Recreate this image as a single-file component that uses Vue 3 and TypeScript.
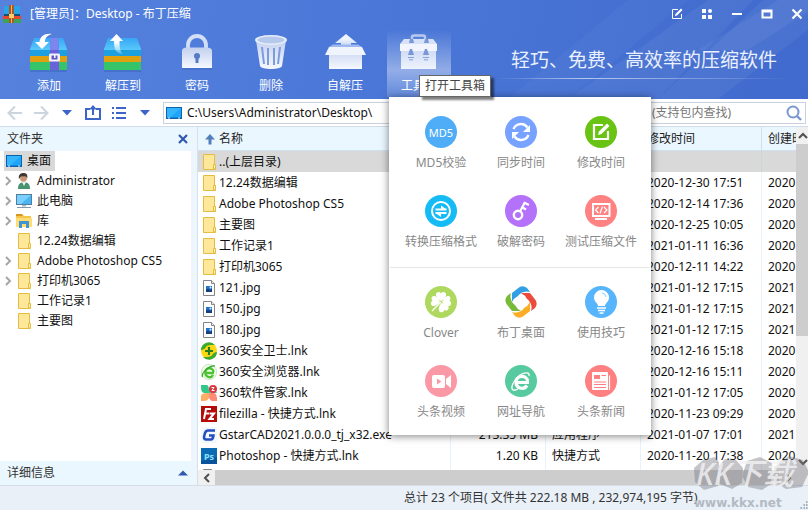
<script setup lang="ts">
import { ref } from 'vue'

interface TreeNode { label: string; icon: string; open: boolean }
interface FileRow { name: string; icon: string; size?: string; type?: string; modified?: string; created?: string }
interface MenuEntry { label: string; icon: string }

const search = ref('')
const path = ref('C:\\Users\\Administrator\\Desktop\\')

const tools: MenuEntry[] = [
  { label: '添加', icon: 'add' },
  { label: '解压到', icon: 'extract' },
  { label: '密码', icon: 'lock' },
  { label: '删除', icon: 'trash' },
  { label: '自解压', icon: 'selfx' },
]

const tree: TreeNode[] = [
  { label: 'Administrator', icon: 'user', open: true },
  { label: '此电脑', icon: 'pc', open: true },
  { label: '库', icon: 'library', open: true },
  { label: '12.24数据编辑', icon: 'folder', open: false },
  { label: 'Adobe Photoshop CS5', icon: 'folder', open: true },
  { label: '打印机3065', icon: 'folder', open: true },
  { label: '工作记录1', icon: 'folder', open: false },
  { label: '主要图', icon: 'folder', open: false },
]

const files: FileRow[] = [
  { name: '..(上层目录)', icon: 'folder' },
  { name: '12.24数据编辑', icon: 'folder', modified: '2020-12-30 17:51', created: '2020' },
  { name: 'Adobe Photoshop CS5', icon: 'folder', modified: '2020-12-14 17:36', created: '2020' },
  { name: '主要图', icon: 'folder', modified: '2020-12-25 10:05', created: '2020' },
  { name: '工作记录1', icon: 'folder', modified: '2021-01-11 16:36', created: '2020' },
  { name: '打印机3065', icon: 'folder', modified: '2020-12-11 14:22', created: '2020' },
  { name: '121.jpg', icon: 'jpg', modified: '2021-01-12 17:15', created: '2021' },
  { name: '150.jpg', icon: 'jpg', modified: '2021-01-12 17:15', created: '2021' },
  { name: '180.jpg', icon: 'jpg', modified: '2021-01-12 17:15', created: '2021' },
  { name: '360安全卫士.lnk', icon: 'guard', modified: '2020-12-16 15:18', created: '2020' },
  { name: '360安全浏览器.lnk', icon: 'browser', modified: '2020-12-16 15:11', created: '2020' },
  { name: '360软件管家.lnk', icon: 'manager', modified: '2021-01-12 17:05', created: '2020' },
  { name: 'filezilla - 快捷方式.lnk', icon: 'filezilla', modified: '2020-11-23 09:29', created: '2020' },
  { name: 'GstarCAD2021.0.0.0_tj_x32.exe', icon: 'gstar', size: '213.35 MB', type: '应用程序', modified: '2021-01-07 17:01', created: '2021' },
  { name: 'Photoshop - 快捷方式.lnk', icon: 'ps', size: '1.20 KB', type: '快捷方式', modified: '2020-11-20 17:38', created: '2020' },
  { name: '', icon: 'jpg' },
]

const menu: MenuEntry[][] = [
  [
    { label: 'MD5校验', icon: 'md5' },
    { label: '同步时间', icon: 'sync' },
    { label: '修改时间', icon: 'edit' },
    { label: '转换压缩格式', icon: 'convert' },
    { label: '破解密码', icon: 'key' },
    { label: '测试压缩文件', icon: 'test' },
  ],
  [
    { label: 'Clover', icon: 'clover' },
    { label: '布丁桌面', icon: 'pudding' },
    { label: '使用技巧', icon: 'bulb' },
    { label: '头条视频', icon: 'video' },
    { label: '网址导航', icon: 'ie' },
    { label: '头条新闻', icon: 'news' },
  ],
]

const box = `<rect x="0" y="35" width="37" height="3" fill="#3158ad" opacity=".35"/>
<path d="M4 4H33L37 15V17H0V15Z" fill="url(#gLid)"/><rect y="16" width="37" height="7" fill="#1fa0de"/>
<rect y="22" width="37" height="7" fill="#dfa10d"/><rect y="28" width="37" height="8" fill="#35c46a"/>`

// 38 x 38 toolbar pictures
const toolIcons: Record<string, string> = {
  add: `${box}<path d="M21 4H28L29 16V36H20V16Z" fill="#6a62d8"/><path d="M21 4H28L29 16H20Z" fill="#7d86ee"/>
<rect x="19" y="19.500" width="11" height="8" rx="1.500" fill="#f4f4ff"/><rect x="21.500" y="21.500" width="6" height="4" fill="#6156c8"/><rect x="24" y="21" width="1.500" height="3" fill="#fff"/>
<path d="M22 0C15 -1 10 2 9.500 8H5L12 15L19 8H15C15 4 17 1.500 22 0Z" fill="#fff"/>`,
  extract: `${box}<path d="M12.500 0L19 7H15.500C15.500 13 16 18 19 20C12 20 10 15 10 7H6Z" fill="url(#gUp)"/>`,
  lock: `<path d="M10 16V11A9 9 0 0 1 28 11V16" fill="none" stroke="#d3dff6" stroke-width="3.800"/>
<rect x="4" y="34" width="30" height="2" fill="#3158ad" opacity=".3"/><path d="M4 17C4 14 7 13.500 9 13.500H28C31 13.500 34 14 34 17V34H4Z" fill="url(#gW)"/>
<circle cx="19" cy="22" r="3" fill="#557bc6"/><rect x="17.500" y="23" width="3" height="6" fill="#557bc6"/>`,
  trash: `<path d="M4 6L8 32C9 36 29 36 30 32L34 6Z" fill="url(#gW)"/><ellipse cx="19" cy="6" rx="16" ry="5" fill="#e8effb"/><ellipse cx="19" cy="6" rx="13.500" ry="3.500" fill="#b6c8ec"/>
<path d="M10 13L12 30M16 14V31M22 14V31M28 13L26 30" stroke="#7e9bdc" stroke-width="2" fill="none"/>`,
  selfx: `<path d="M20 0L31 9H25V17H15V9H9Z" fill="url(#gUp2)"/><path d="M3 13L7 10.500H32L36 13" fill="#9db9ee"/>
<path d="M3 13H36V35H3Z" fill="url(#gW)"/><path d="M3 13H36L40 21H-1Z" fill="#f0f4fd"/>`,
  kit: `<path d="M12 6V3Q12 1.500 14 1.500H23Q25 1.500 25 3V6" fill="none" stroke="#b9c9ee" stroke-width="2.500"/>
<path d="M4 5H33L37 10V17H0V10Z" fill="#d7e1f7"/><path d="M0 10H37V17H0Z" fill="#f2f5fd"/><rect x="1" y="17" width="35" height="18" fill="url(#gW2)"/>
<path d="M10 5H13L14 9H9ZM25 5H28L29 9H24ZM10 15H12L14 21H8ZM25 15H27L29 21H23Z" fill="#7996d9"/><path d="M8 23.500H14M9 25.800H13M23 23.500H29M24 25.800H28" stroke="#86a0dc" stroke-width="1"/>`,
}

// 16 x 16 pictures for the tree and the file list
const smallIcons: Record<string, string> = {
  folder: `<path d="M2.500 .500H13.500V11H14.500V15.500H2.500Z" fill="#ffe79a" stroke="#e3bd42"/><path d="M12.500 15V10.500H14.500V15Z" fill="#fff0b8" stroke="#e3bd42"/>`,
  desktop: `<rect x="0" y="2" width="16" height="12" fill="#0b63ad"/><rect x="1" y="3" width="14" height="9.500" fill="#1ea5f7"/><path d="M1 3H15L4 12.500H1Z" fill="#35b5ff"/><path d="M2 13H4M12 13H14" stroke="#d5efff"/>`,
  user: `<path d="M2 16C2 11 4 10 7 9H9C12 10 14 11 14 16Z" fill="#489470"/><path d="M6 9L8 13L10 9Z" fill="#f2f2ec"/><circle cx="7.500" cy="5.500" r="3.300" fill="#c99672"/><path d="M3 6C2 1 5 0 8 0C11 0 12 3 11 6C11 4 10 3 8 3.500C6 3 5 3 4.500 4Z" fill="#40372f"/>`,
  pc: `<rect x=".500" y="1.500" width="15" height="10" fill="#48b6f3" stroke="#557e9c"/><path d="M1 2H15L5 11H1Z" fill="#7acfff"/><rect x="6" y="12" width="4" height="1.500" fill="#aab8c3"/><path d="M1 14.500H15" stroke="#8299aa"/>`,
  library: `<path d="M0 1H6L8 3H15V14H0Z" fill="#f4c64b"/><path d="M0 1H6L7 3H0Z" fill="#d6981f"/><path d="M0 5H16V14H0Z" fill="#ffdc75"/><path d="M3 15V8H13V15H10V11H6V15Z" fill="#3f96d2"/>`,
  jpg: `<path d="M2.500 .500H10.500L13.500 3.500V15.500H2.500Z" fill="#fff" stroke="#858585"/><path d="M10.500 .500V3.500H13.500" fill="#eee" stroke="#858585"/><rect x="5" y="6" width="6" height="6" fill="#2474c8"/><path d="M5 12V9.500L7 8.500L9 10L11 8.500V12Z" fill="#153f7b"/><circle cx="9.500" cy="7.500" r="1" fill="#d8f0ff"/>`,
  guard: `<circle cx="8" cy="8" r="8" fill="#ffd810"/><path d="M0 7A8 8 0 0 1 14 2C10 2 6 2 5 4C4 6 2 7 0 7ZM16 9A8 8 0 0 1 2 14C6 14 10 14 11 12C12 10 14 9 16 9Z" fill="#3daa2f"/><path d="M8 4V12M4 8H12" stroke="#237f20" stroke-width="2.200"/>`,
  browser: `<circle cx="8" cy="8" r="7.700" fill="#eefbe9" stroke="#c2dcc0" stroke-width=".800"/><path d="M13 9H5.500M4.500 8.500A4 4 0 0 1 12.500 8M4.500 8.500A4 4 0 0 0 12 11" fill="none" stroke="#4cc22f" stroke-width="2.300"/><path d="M1.500 13C0 9 8 1 14 2" fill="none" stroke="#37a92d" stroke-width="1.300"/>`,
  manager: `<path d="M0 0H6C8 1 8 4 8 8H3C0 7 0 4 0 0Z" fill="#32c889"/><path d="M0 16V11C1 8 4 8 8 8V13C7 16 4 16 0 16Z" fill="#ffad63"/><path d="M8 8H13C16 9 16 12 16 16H11C8 15 8 12 8 8Z" fill="#ff8b75"/><path d="M8 8V3Q12 0 16 8Z" fill="#58cba3"/><circle cx="12" cy="4" r="4" fill="#d9363f"/><path d="M10.500 2.500H13L11 5.500H13.500" fill="none" stroke="#fff"/>`,
  filezilla: `<rect width="16" height="16" fill="#b40b0b"/><path d="M3 13L5 3H10M4.500 7.500H8M8.500 7.500H13L8.500 13H13" fill="none" stroke="#fff" stroke-width="2"/>`,
  gstar: `<rect width="16" height="16" rx="2" fill="#f3f7ff"/><path d="M14 3.500H7Q5 3.500 4 6L3 10Q3 12.500 5 12.500H10Q12 12.500 12.500 8.500H8" fill="none" stroke="#254fbe" stroke-width="2.500"/>`,
  ps: `<rect width="16" height="16" fill="#08549c"/><path d="M0 0H16V9L0 13Z" fill="#0b6bb5"/><text x="8" y="11.500" text-anchor="middle" font-size="9" font-weight="700" fill="#8de0ff">Ps</text>`,
}

const disc = (fill: string, body: string) => `<circle cx="16" cy="16" r="16" fill="${fill}"/>${body}`
const leaf = 'M16 15C12.500 13 9.500 9.500 11.500 7C13 5.500 15 6 16 7.500C17 6 19 5.500 20.500 7C22.500 9.500 19.500 13 16 15Z'
const petal = 'M7 7L14 1.500Q18 -1 22 2L25 6C19 4 14 8 13 10Q9 12 7 16Z'

// 32 x 32 toolbox pictures
const menuIcons: Record<string, string> = {
  md5: disc('#4eadf6', '<text x="16" y="21" text-anchor="middle" font-size="11" fill="#fff">MD5</text>'),
  sync: disc('#78a2ff', `<path d="M8.500 13A8 8 0 0 1 22.500 11.500M23.500 19A8 8 0 0 1 9.500 20.500" fill="none" stroke="#fff" stroke-width="2.400"/><path d="M25 9V16H18ZM7 23V16H14Z" fill="#fff"/>`),
  edit: disc('#69c312', `<path d="M18 9H9V23H23V15" fill="none" stroke="#fff" stroke-width="2.200"/><path d="M13 19L14 15.500L22 7.500L24.500 10L16.500 18Z" fill="#fff"/>`),
  convert: disc('#15bbf5', `<circle cx="16" cy="16" r="9" fill="none" stroke="#fff" stroke-width="2"/><path d="M10.500 14.500H21.500M21.500 18H10.500" stroke="#fff" stroke-width="1.800"/><path d="M16 10.500L21.500 14.500H16ZM16 22L10.500 18H16Z" fill="#fff"/>`),
  key: disc('#b471fa', `<circle cx="13" cy="20" r="4.200" fill="none" stroke="#fff" stroke-width="2.400"/><path d="M15 16.500L20 7M19.500 7.700L24 10M17.500 12.500L21 14.500" stroke="#fff" stroke-width="2.200" fill="none"/>`),
  test: disc('#ff8282', `<rect x="8" y="9" width="16.500" height="12" fill="none" stroke="#fff" stroke-width="2"/><path d="M13.500 12L10.500 15L13.500 18M19 12L22 15L19 18M17.500 11.500L15 18.500" fill="none" stroke="#fff" stroke-width="1.200"/><path d="M10 24H22" stroke="#fff" stroke-width="2"/>`),
  clover: disc('#aed95e', `<g fill="#fff"><path d="${leaf}"/><path d="${leaf}" transform="rotate(82 16 16)"/><path d="${leaf}" transform="rotate(-82 16 16)"/><path d="${leaf}" transform="rotate(158 16 16)"/></g><path d="M16 16L7 25" stroke="#fff" stroke-width="1.300"/>`),
  pudding: `<path d="${petal}" fill="#329ee4"/><path d="${petal}" fill="#ed4a3e" transform="rotate(90 16 16)"/><path d="${petal}" fill="#fbad26" transform="rotate(180 16 16)"/><path d="${petal}" fill="#78bb3b" transform="rotate(270 16 16)"/>`,
  bulb: disc('#56b5fc', `<path d="M13 20C13 17 9 16 9 11.500A7.500 7.500 0 0 1 24 11.500C24 16 20 17 20 20Z" fill="#fff"/><path d="M12 22H21M13 24.500H20M14.500 27H18.500" stroke="#fff" stroke-width="1.300"/><path d="M17 7Q20.500 7 21 11" stroke="#91d0ff" stroke-width="1" fill="none"/>`),
  video: disc('#fa99a5', `<rect x="7" y="10" width="13" height="13" rx="2" fill="#fff"/><path d="M21 14L26 10V23L21 19Z" fill="#fff"/><path d="M12 13.500V19.500L16.500 16.500Z" fill="#fa99a5"/>`),
  ie: disc('#58caa0', `<path d="M24 17.500H12M11 17A6 6 0 0 1 22.800 16M11 17A6 6 0 0 0 22 20.500" fill="none" stroke="#fff" stroke-width="3.200"/><path d="M24 11C25 7 20 7 15 10C9 14 5 23 8 25C10 26 13 24 14.500 23" fill="none" stroke="#fff" stroke-width="1.300"/>`),
  news: disc('#ff8080', `<path d="M7 8Q7 7 8 7H22Q23 7 23 8V25H8Q7 25 7 24Z" fill="#fff"/><path d="M24.500 10.500V25" stroke="#fff" stroke-width="1.200"/><rect x="9" y="10" width="6" height="4" fill="#ff8080"/><path d="M16.500 10.500H21M9 17H21M9 19.500H21M9 22.500H21" stroke="#ff8080" stroke-width="1"/>`),
}
</script>

<template>
  <div class="window">
    <svg class="defs" aria-hidden="true" width="0" height="0">
      <defs>
        <linearGradient id="gLid" x1="0" y1="0" x2="0" y2="1"><stop offset="0" stop-color="#37a6f5" /><stop offset="1" stop-color="#5bcbfb" /></linearGradient>
        <linearGradient id="gUp" x1="0" y1="0" x2="0" y2="1"><stop offset=".4" stop-color="#fff" /><stop offset="1" stop-color="#fff" stop-opacity=".2" /></linearGradient>
        <linearGradient id="gUp2" x1="0" y1="0" x2="0" y2="1"><stop offset=".3" stop-color="#eef3fe" /><stop offset="1" stop-color="#a8c0f0" /></linearGradient>
        <linearGradient id="gW" x1="0" y1="0" x2="0" y2="1"><stop offset="0" stop-color="#c3d0ee" /><stop offset="1" stop-color="#f5f8ff" /></linearGradient>
        <linearGradient id="gW2" x1="0" y1="0" x2="0" y2="1"><stop offset="0" stop-color="#d1dcf5" /><stop offset="1" stop-color="#eef3fd" /></linearGradient>
      </defs>
    </svg>

    <header class="top">
      <svg class="beams" viewBox="0 0 300 99" preserveAspectRatio="none" aria-hidden="true">
        <path d="M120 0H180L60 99H0Z" fill="#fff" opacity=".03" />
        <path d="M200 0H245L150 99H60Z" fill="#fff" opacity=".05" />
        <path d="M255 0H300V30L210 99H150Z" fill="#fff" opacity=".05" />
        <path d="M270 0H300V12L240 50H190Z" fill="#fff" opacity=".05" />
      </svg>

      <div class="titlebar">
        <svg class="logo" viewBox="0 0 18 19" aria-hidden="true">
          <rect x="1" y="1" width="16" height="8" fill="#28a5e9" /><rect x="1" y="9" width="16" height="3" fill="#17526c" />
          <rect y="11" width="18" height="3" fill="#e5482f" /><rect y="14" width="18" height="4" fill="#3aa557" />
          <rect x="6" y="0" width="5" height="18" fill="#a85a24" /><rect x="8" y="0" width="1" height="18" fill="#f0b06a" /><rect x="6" y="9" width="5" height="4" fill="#ffcc66" />
        </svg>
        <h1 class="title">[管理员]：Desktop - 布丁压缩</h1>
        <div class="winbtns">
          <button type="button" aria-label="反馈"><svg viewBox="0 0 12 12"><path d="M7 1.500H1.500V10.500H10.500V6" fill="none" stroke="#fff" /><path d="M4 8L4.500 6L10 .500L11.500 2L6 7.500Z" fill="#fff" /></svg></button>
          <button type="button" aria-label="菜单"><svg viewBox="0 0 12 12"><path d="M1 1H5V5H1ZM1 7H5V11H1ZM7 7H11V11H7Z" fill="#fff" /><circle cx="9" cy="3" r="2" fill="#fff" /></svg></button>
          <button type="button" aria-label="最小化"><svg viewBox="0 0 12 12"><path d="M1 6H11" stroke="#fff" stroke-width="2" /></svg></button>
          <button type="button" aria-label="最大化"><svg viewBox="0 0 12 12"><path d="M.500 1.500H11.500V10.500H.500Z M2.500 4.500V8.500H9.500V4.500Z" fill="#fff" fill-rule="evenodd" /></svg></button>
          <button type="button" aria-label="关闭"><svg viewBox="0 0 12 12"><path d="M1.500 1.500L10.500 10.500M10.500 1.500L1.500 10.500" stroke="#fff" stroke-width="2.200" /></svg></button>
        </div>
      </div>

      <div class="toolbar">
        <button v-for="t in tools" :key="t.icon" type="button" class="tool">
          <svg viewBox="0 0 38 38" aria-hidden="true" v-html="toolIcons[t.icon]"></svg>
          <span>{{ t.label }}</span>
        </button>
        <div class="toolwrap">
          <button type="button" class="tool active">
            <svg viewBox="0 0 38 38" aria-hidden="true" v-html="toolIcons.kit"></svg>
            <span>工具箱</span>
          </button>
          <div class="menu">
            <div v-for="(group, g) in menu" :key="g" class="group">
              <button v-for="m in group" :key="m.icon" type="button" class="entry">
                <svg viewBox="0 0 32 32" aria-hidden="true" v-html="menuIcons[m.icon]"></svg>
                <span>{{ m.label }}</span>
              </button>
            </div>
          </div>
          <div class="tip" role="tooltip">打开工具箱</div>
        </div>
        <p class="slogan">轻巧、免费、高效率的压缩软件</p>
      </div>
    </header>

    <div class="nav">
      <div class="navbtns">
        <button type="button" class="wide" aria-label="后退"><svg viewBox="0 0 16 16"><path d="M8 1.500L1.500 8L8 14.500M2 8H15" fill="none" stroke="#ccd5de" stroke-width="2" /></svg></button>
        <button type="button" class="wide" aria-label="前进"><svg viewBox="0 0 16 16"><path d="M8 1.500L14.500 8L8 14.500M14 8H1" fill="none" stroke="#ccd5de" stroke-width="2" /></svg></button>
        <button type="button" class="wide" aria-label="历史"><svg viewBox="0 0 16 16"><path d="M3 5H13L8 10.500Z" fill="#3b66c8" /></svg></button>
        <button type="button" class="wide" aria-label="上一级"><svg viewBox="0 0 16 16"><path d="M5 4H1V14H15V4H11" fill="none" stroke="#3b66c8" stroke-width="2" /><path d="M8 0L12 4.500H9V10H7V4.500H4Z" fill="#3b66c8" /></svg></button>
        <button type="button" class="wide" aria-label="视图"><svg viewBox="0 0 16 16"><path d="M5 3H15M5 8H15M5 13H15" stroke="#3b66c8" stroke-width="2" /><path d="M1 3H3M1 8H3M1 13H3" stroke="#3b66c8" stroke-width="2" /></svg></button>
        <button type="button" class="wide" aria-label="视图选项"><svg viewBox="0 0 16 16"><path d="M3 5H13L8 10.500Z" fill="#3b66c8" /></svg></button>
      </div>
      <div class="field address">
        <svg viewBox="0 0 16 16" aria-hidden="true" v-html="smallIcons.desktop"></svg>
        <input v-model="path" type="text" aria-label="地址" />
      </div>
      <div class="field search">
        <input v-model="search" type="text" placeholder="(支持包内查找)" aria-label="查找" />
        <button type="button" aria-label="搜索"><svg viewBox="0 0 16 16"><circle cx="7" cy="7" r="5.500" fill="none" stroke="#7b97d2" stroke-width="2" /><path d="M11 11L15 15" stroke="#7b97d2" stroke-width="2.400" /></svg></button>
      </div>
    </div>

    <main class="body">
      <aside class="side">
        <div class="panelhead">
          <h2>文件夹</h2>
          <button type="button" aria-label="关闭文件夹"><svg viewBox="0 0 10 10"><path d="M1 1L9 9M9 1L1 9" stroke="#3157b0" stroke-width="2.200" /></svg></button>
        </div>
        <ul class="tree">
          <li class="root">
            <svg class="ico" viewBox="0 0 16 16" aria-hidden="true" v-html="smallIcons.desktop"></svg><span>桌面</span>
          </li>
          <li v-for="n in tree" :key="n.label">
            <svg class="chev" viewBox="0 0 8 12" aria-hidden="true"><path v-if="n.open" d="M2 2L6 6L2 10" fill="none" stroke="#a6a6a6" stroke-width="2" /></svg>
            <svg class="ico" viewBox="0 0 16 16" aria-hidden="true" v-html="smallIcons[n.icon]"></svg><span>{{ n.label }}</span>
          </li>
        </ul>
        <div class="panelhead details">
          <h2>详细信息</h2>
          <button type="button" aria-label="展开详细信息"><svg viewBox="0 0 10 10"><path d="M0 7.500H10L5 2.500Z" fill="#3157b0" /></svg></button>
        </div>
      </aside>

      <section class="list">
        <div class="listmain">
          <div class="rows">
            <table>
              <colgroup><col class="cname" /><col class="csize" /><col class="csize" /><col class="cdate" /><col /></colgroup>
              <thead>
                <tr>
                  <th scope="col"><span class="cell"><svg class="ico" viewBox="0 0 16 16" aria-hidden="true"><path d="M9 3L14 8.500H10.500V13.500H7.500V8.500H4Z" fill="#5280bd" /></svg>名称</span></th>
                  <td></td>
                  <td></td>
                  <th scope="col">修改时间</th>
                  <th scope="col">创建时间</th>
                </tr>
              </thead>
              <tbody>
                <tr v-for="(f, i) in files" :key="i" :class="{ selected: i === 0 }">
                  <td class="name"><span class="cell"><svg class="ico" viewBox="0 0 16 16" aria-hidden="true" v-html="smallIcons[f.icon]"></svg>{{ f.name }}</span></td>
                  <td class="num">{{ f.size }}</td>
                  <td>{{ f.type }}</td>
                  <td>{{ f.modified }}</td>
                  <td>{{ f.created }}</td>
                </tr>
              </tbody>
            </table>
          </div>
          <div class="hbar">
            <button type="button" aria-label="向左滚动"><svg viewBox="0 0 10 10"><path d="M7 1L3 5L7 9" /></svg></button>
            <div class="hthumb"></div>
            <button type="button" aria-label="向右滚动"><svg viewBox="0 0 10 10"><path d="M3 1L7 5L3 9" /></svg></button>
          </div>
        </div>
        <div class="vbar">
          <button type="button" aria-label="向上滚动"><svg viewBox="0 0 10 10"><path d="M1 7L5 3L9 7" /></svg></button>
          <div class="vtrack"><div class="vthumb"></div></div>
          <button type="button" aria-label="向下滚动"><svg viewBox="0 0 10 10"><path d="M1 3L5 7L9 3" /></svg></button>
        </div>
      </section>
    </main>

    <footer class="status">
      <span>总计 23 个项目( 文件共 222.18 MB , 232,974,195 字节)</span>
      <svg class="grip" viewBox="0 0 9 9" aria-hidden="true"><path d="M7 1H8.500M4.500 4H6M7 4H8.500M1.500 7H3M4.500 7H6M7 7H8.500" stroke="#8b98a5" stroke-width="1.500" /></svg>
    </footer>

    <svg class="mark" viewBox="0 0 120 54" aria-hidden="true">
      <g fill="#77777f" opacity=".42">
        <path d="M11 4L23 1L27 6L26 30L12 34L3 26L2 12Z" /><path d="M33 3L44 4L51 12L50 27L40 33L28 28L27 10Z" />
        <path d="M55 5L68 1L80 7L79 28L70 34L56 31L50 20Z" /><path d="M88 6L97 0L111 4L117 16L110 31L94 33L83 26L82 13Z" />
      </g>
      <text class="brand" x="4" y="29">KK下载</text>
      <text class="url" x="2" y="51">www.kkx.net</text>
    </svg>
  </div>
</template>

<style>
body {
  margin: 0;
}
</style>

<style scoped>
.window {
  position: relative;
  display: flex;
  flex-direction: column;
  height: 100vh;
  overflow: hidden;
  background: #fff;
  color: #111;
  font: 12px/18px "Noto Sans", "Noto Sans CJK SC", sans-serif;
}
.defs { position: absolute; }
svg { display: block; flex: none; overflow: visible; }
button {
  display: flex;
  align-items: center;
  justify-content: center;
  padding: 0;
  border: 0;
  background: none;
  color: inherit;
  font: inherit;
}
h1, h2, p, ul { margin: 0; padding: 0; font: inherit; list-style: none; }

.top {
  position: relative;
  z-index: 2;
  flex: none;
  height: 99px;
  background: linear-gradient(100deg, #5682de 0%, #4b78d8 45%, #406acd 100%);
  color: #fff;
}
.beams { position: absolute; top: 0; right: 0; width: 300px; height: 99px; overflow: hidden; }
.titlebar { position: relative; display: flex; align-items: center; height: 28px; padding-left: 3px; }
.logo { width: 18px; height: 19px; }
.title { flex: 1; padding-left: 9px; }
.winbtns { display: flex; gap: 8px; }
.winbtns button { width: 22px; height: 22px; }
.winbtns svg { width: 12px; height: 12px; }

.toolbar { position: relative; display: flex; gap: 10px; padding: 2px 17px; }
.tool { flex-direction: column; justify-content: flex-start; gap: 5px; width: 64px; height: 67px; padding-top: 4px; }
.tool svg { width: 38px; height: 38px; }
.tool.active { background: linear-gradient(rgba(255, 255, 255, 0), rgba(255, 255, 255, .4) 60%, rgba(255, 255, 255, .15)); }
.toolwrap { position: relative; }
.slogan {
  margin: 16px 0 0 auto;
  padding: 0 14px;
  height: 32px;
  border-bottom: 1px solid;
  border-image: linear-gradient(90deg, transparent, rgba(255, 255, 255, .6) 30%, transparent) 1;
  color: #eaf0ff;
  font-size: 19px;
  line-height: 28px;
  white-space: nowrap;
}

.menu {
  position: absolute;
  top: 67px;
  left: 2px;
  width: 262px;
  background: #fff;
  box-shadow: 0 1px 8px rgba(0, 0, 0, .5);
  color: #888;
}
.group { display: grid; grid-template-columns: repeat(3, 80px); justify-content: center; padding: 19px 0 16px 2px; row-gap: 23px; }
.group + .group { margin: 0 1px; padding: 18px 0 14px 2px; border-top: 1px solid #e6e6e6; }
.entry { flex-direction: column; gap: 6px; white-space: nowrap; }
.entry svg { width: 32px; height: 32px; }
.tip {
  position: absolute;
  top: 45px;
  left: 32px;
  padding: 1px 5px;
  border: 1px solid #666;
  background: #fff;
  box-shadow: 3px 3px 2px rgba(0, 0, 0, .5);
  color: #444;
  white-space: nowrap;
}

.nav { display: flex; flex: none; align-items: center; height: 27px; gap: 4px; padding-right: 2px; border-bottom: 1px solid #d0dcea; }
.navbtns { display: flex; gap: 10px; width: 152px; padding-left: 7px; }
.wide svg { width: 16px; height: 16px; }
.field { display: flex; align-items: center; box-sizing: border-box; height: 22px; border: 1px solid #c9d1de; background: #fff; }
.field svg { width: 16px; height: 16px; }
.field input { flex: 1; min-width: 0; padding: 0; border: 0; outline: 0; background: none; color: #111; font: inherit; }
.address { flex: 1; gap: 5px; padding-left: 2px; }
.search { width: 168px; padding: 0 3px 0 13px; }
.search input::placeholder { color: #777; opacity: 1; }

.body { display: flex; flex: 1; min-height: 0; }
.side { display: flex; flex: none; flex-direction: column; width: 191px; border-right: 1px solid #d3e0ee; }
.panelhead { display: flex; flex: none; align-items: center; justify-content: space-between; height: 24px; padding: 0 3px 0 7px; background: #ebf7ff; color: #333; }
.panelhead svg { width: 10px; height: 10px; }
.tree { flex: 1; }
.tree li { display: flex; align-items: center; height: 20px; padding-left: 4px; }
.tree .root { width: 49px; padding-left: 2px; margin-left: 4px; background: #d9d9d9; }
.chev { width: 8px; height: 12px; margin-right: 4px; }
.ico { width: 16px; height: 16px; }
.tree span { padding-left: 5px; white-space: nowrap; }

.list { display: flex; flex: 1; min-width: 0; margin-left: -1px; border-left: 6px solid #edf5fd; }
.listmain { display: flex; flex: 1; flex-direction: column; min-width: 0; border-left: 1px solid #d3e0ee; }
.rows { flex: 1; min-height: 0; overflow: hidden; }
table { width: 100%; table-layout: fixed; border-collapse: separate; border-spacing: 0; }
.cname { width: 253px; }
.csize { width: 95px; }
.cdate { width: 121px; }
th, td { height: 21px; box-sizing: border-box; padding: 0 0 0 6px; border-right: 1px solid #e8f2fb; overflow: hidden; font-weight: 400; text-align: left; white-space: nowrap; }
thead th, thead td { height: 24px; border-right-color: #cfdfee; border-bottom: 1px solid #cfdfee; background: #ebf7ff; color: #222; }
th:first-child, td.name { padding-left: 3px; overflow: visible; }
td.num { padding: 0 7px 0 0; text-align: right; }
th:last-child, td:last-child { border-right: 0; }
.cell { display: flex; align-items: center; gap: 2px; }
.selected td { border-right-color: #cdd5dc; background: #d9d9d9; }
.selected .name { border-right-color: #d9d9d9; }

.hbar { display: flex; flex: none; height: 15px; background: #f0f0f0; }
.hbar button { width: 17px; height: 15px; }
.hthumb { flex: 1; background: #cdcdcd; }
.vbar { display: flex; flex: none; flex-direction: column; width: 12px; padding-bottom: 15px; background: #f0f0f0; }
.vbar button { width: 14px; height: 17px; }
.vtrack { flex: 1; }
.vthumb { height: 62%; background: #cdcdcd; }
.hbar svg, .vbar svg { width: 10px; height: 10px; fill: none; stroke: #505050; stroke-width: 2; }

.status { display: flex; flex: none; align-items: center; justify-content: space-between; height: 24px; padding-left: 50%; border-top: 1px solid #d5dde6; background: #e9f0f8; color: #333; white-space: nowrap; }
.grip { align-self: flex-end; width: 9px; height: 9px; }

.mark { position: absolute; right: -4px; bottom: 0; z-index: 1; width: 120px; height: 54px; font-family: "Noto Sans", "Noto Sans CJK SC", sans-serif; pointer-events: none; }
.brand { fill: #f2f2f4; font-size: 31px; font-style: italic; font-weight: 500; opacity: .8; }
.url { fill: #b4bac3; font: 700 12px "DejaVu Sans", sans-serif; }
</style>
